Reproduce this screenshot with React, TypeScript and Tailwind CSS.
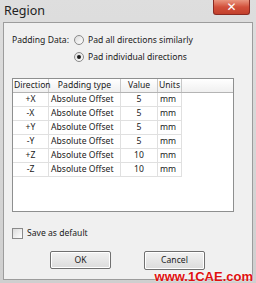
import React from 'react';

const rows = [
  { dir: '+X', type: 'Absolute Offset', value: '5', units: 'mm' },
  { dir: '-X', type: 'Absolute Offset', value: '5', units: 'mm' },
  { dir: '+Y', type: 'Absolute Offset', value: '5', units: 'mm' },
  { dir: '-Y', type: 'Absolute Offset', value: '5', units: 'mm' },
  { dir: '+Z', type: 'Absolute Offset', value: '10', units: 'mm' },
  { dir: '-Z', type: 'Absolute Offset', value: '10', units: 'mm' },
];

const Radio: React.FC<{ checked?: boolean }> = ({ checked }) => (
  <span className="w-[10px] h-[10px] rounded-full border border-[#8a8a8a] bg-gradient-to-br from-[#dcdcdc] to-white flex items-center justify-center">
    {checked && <span className="w-[4px] h-[4px] rounded-full bg-[#1a1a1a]" />}
  </span>
);

const App: React.FC = () => {
  return (
    <div className="w-[256px] h-[283px] relative flex flex-col bg-gradient-to-b from-[#dedede] to-[#cfcfcf] px-[3px] pb-[3px] font-['Noto_Sans',sans-serif] text-[#1a1a1a] overflow-hidden">
      {/* Title bar */}
      <div className="h-[22px] flex items-center pl-[1px] text-[12.5px] text-[#222]">Region</div>
      <div className="absolute top-0 right-[6px] w-[37px] h-[15px] rounded-b-[3px] border border-[#8b2a22] border-t-0 bg-gradient-to-b from-[#e9957f] via-[#d2503b] to-[#c2402c] flex items-center justify-center">
        <span className="text-white text-[12px] font-bold leading-none font-['DejaVu_Sans',sans-serif]">✕</span>
      </div>

      {/* Body */}
      <div className="flex-1 bg-[#f0f0f0] border border-[#9c9c9c] flex flex-col pl-[8px] text-[8.6px] leading-[12px]">
        <div className="flex items-center mt-[11px]">
          <span className="w-[62px]">Padding Data:</span>
          <Radio />
          <span className="ml-[4px]">Pad all directions similarly</span>
        </div>
        <div className="flex items-center mt-[5px] ml-[62px]">
          <Radio checked />
          <span className="ml-[4px]">Pad individual directions</span>
        </div>

        {/* Table */}
        <div className="mt-[15px] w-[222px] h-[134px] border border-[#8e8f8f] bg-white">
          <div className="grid grid-cols-[36px_72px_37px_24px_1fr] h-[14px] bg-gradient-to-b from-white to-[#f0f0f0] border-b border-[#b4b4b4]">
            <div className="border-r border-[#c8c8c8] flex items-center pl-[1px] leading-none">Direction</div>
            <div className="border-r border-[#c8c8c8] flex items-center justify-center leading-none">Padding type</div>
            <div className="border-r border-[#c8c8c8] flex items-center justify-center leading-none">Value</div>
            <div className="border-r border-[#c8c8c8] flex items-center justify-center leading-none">Units</div>
            <div />
          </div>
          {rows.map((r) => (
            <div key={r.dir} className="grid grid-cols-[36px_72px_37px_24px] h-[14px]">
              <div className="border-r border-b border-[#e0e0e0] flex items-center justify-center leading-none">{r.dir}</div>
              <div className="border-r border-b border-[#e0e0e0] flex items-center pl-[2px] leading-none">{r.type}</div>
              <div className="border-r border-b border-[#e0e0e0] flex items-center justify-center leading-none">{r.value}</div>
              <div className="border-r border-b border-[#e0e0e0] flex items-center pl-[2px] leading-none">{r.units}</div>
            </div>
          ))}
        </div>

        {/* Save as default */}
        <div className="flex items-center mt-[15px]">
          <span className="w-[11px] h-[11px] border border-[#8a8a8a] bg-gradient-to-br from-[#dcdcdc] to-white" />
          <span className="ml-[4px]">Save as default</span>
        </div>

        {/* Buttons */}
        <div className="flex mt-[12px] ml-[38px] gap-[33px]">
          <button className="w-[61px] h-[18px] border border-[#707070] rounded-[2px] bg-gradient-to-b from-[#f2f2f2] to-[#dcdcdc] shadow-[inset_0_0_0_1px_#ffffff] text-[8.6px] leading-none">OK</button>
          <button className="w-[61px] h-[19px] border border-[#707070] rounded-[2px] bg-gradient-to-b from-[#f2f2f2] to-[#dcdcdc] shadow-[inset_0_0_0_1px_#ffffff] text-[8.6px] leading-none">Cancel</button>
        </div>
      </div>

      {/* Watermark */}
      <span className="absolute right-[3px] bottom-[0px] text-[13px] leading-[13px] font-bold text-[#e01010] font-['Liberation_Sans',sans-serif] [text-shadow:0_0_2px_#ffffff]">www.1CAE.com</span>
    </div>
  );
};

export default App;
